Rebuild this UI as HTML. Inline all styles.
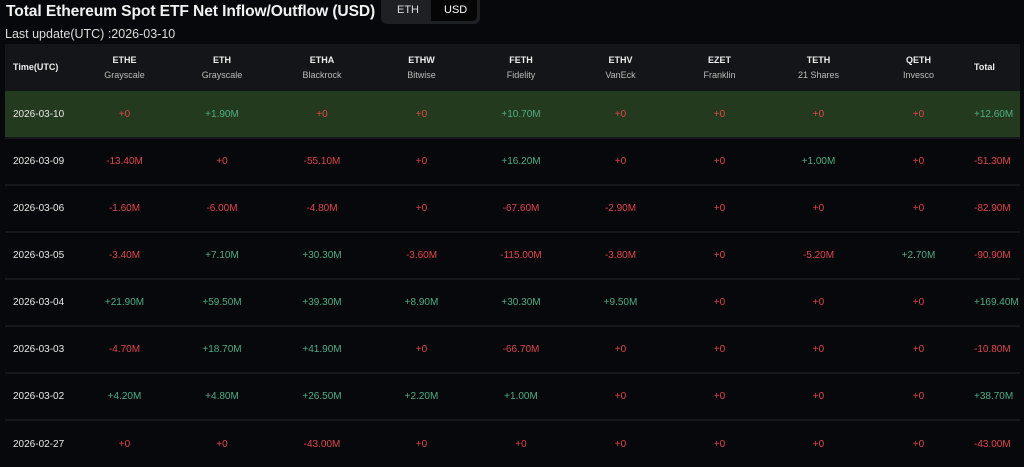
<!DOCTYPE html>
<html><head><style>
*{margin:0;padding:0;box-sizing:border-box}
body{width:1024px;height:464px;background:#07080b;font-family:"Liberation Sans",sans-serif;color:#e6e6e6;overflow:hidden;position:relative}
.title{position:absolute;left:6px;top:3px;font-size:15.6px;font-weight:bold;color:#f2f2f2;letter-spacing:-0.1px}
.tog{position:absolute;left:381px;top:0;width:99px;height:24px;background:#1e2023;border-radius:0 0 6px 6px;}
.tog span{position:absolute;top:4px;font-size:11px;color:#ddd}
.tog .usd{position:absolute;left:50px;top:0;width:46px;height:21px;background:#050505;border-radius:0 0 5px 0}
.upd{position:absolute;left:5px;top:27px;font-size:12.5px;color:#ddd}
table{position:absolute;left:5px;top:44px;width:1015px;border-collapse:collapse;font-size:10px}
th{background:#131518;height:47px;font-weight:normal;font-size:9px;color:#bbb;line-height:15px;text-align:center}
th b{color:#eee;font-weight:bold}
td{height:47px;text-align:center;border-top:2px solid #17181b}
td:first-child,th:first-child{text-align:left;padding-left:8px;color:#e8e8e8}
td:last-child,th:last-child{text-align:left;padding-left:5px}
tr.hl td{background:#243a1e;border-top:none}
.g{color:#4dae85}.r{color:#e0454c}
</style></head><body>
<div class="title">Total Ethereum Spot ETF Net Inflow/Outflow (USD)</div>
<div class="tog"><div class="usd"></div><span style="left:16px">ETH</span><span style="left:63px;color:#fff">USD</span></div>
<div class="upd">Last update(UTC) :2026-03-10</div>
<table>
<colgroup><col style="width:72px"><col style="width:95px"><col style="width:100px"><col style="width:100px"><col style="width:99px"><col style="width:100px"><col style="width:99px"><col style="width:99px"><col style="width:99px"><col style="width:101px"><col></colgroup>
<tr><th><b>Time(UTC)</b></th><th><b>ETHE</b><br>Grayscale</th><th><b>ETH</b><br>Grayscale</th><th><b>ETHA</b><br>Blackrock</th><th><b>ETHW</b><br>Bitwise</th><th><b>FETH</b><br>Fidelity</th><th><b>ETHV</b><br>VanEck</th><th><b>EZET</b><br>Franklin</th><th><b>TETH</b><br>21 Shares</th><th><b>QETH</b><br>Invesco</th><th><b>Total</b></th></tr>
<tr class="hl"><td>2026-03-10</td><td class="r">+0</td><td class="g">+1.90M</td><td class="r">+0</td><td class="r">+0</td><td class="g">+10.70M</td><td class="r">+0</td><td class="r">+0</td><td class="r">+0</td><td class="r">+0</td><td class="g">+12.60M</td></tr>
<tr><td>2026-03-09</td><td class="r">-13.40M</td><td class="r">+0</td><td class="r">-55.10M</td><td class="r">+0</td><td class="g">+16.20M</td><td class="r">+0</td><td class="r">+0</td><td class="g">+1.00M</td><td class="r">+0</td><td class="r">-51.30M</td></tr>
<tr><td>2026-03-06</td><td class="r">-1.60M</td><td class="r">-6.00M</td><td class="r">-4.80M</td><td class="r">+0</td><td class="r">-67.60M</td><td class="r">-2.90M</td><td class="r">+0</td><td class="r">+0</td><td class="r">+0</td><td class="r">-82.90M</td></tr>
<tr><td>2026-03-05</td><td class="r">-3.40M</td><td class="g">+7.10M</td><td class="g">+30.30M</td><td class="r">-3.60M</td><td class="r">-115.00M</td><td class="r">-3.80M</td><td class="r">+0</td><td class="r">-5.20M</td><td class="g">+2.70M</td><td class="r">-90.90M</td></tr>
<tr><td>2026-03-04</td><td class="g">+21.90M</td><td class="g">+59.50M</td><td class="g">+39.30M</td><td class="g">+8.90M</td><td class="g">+30.30M</td><td class="g">+9.50M</td><td class="r">+0</td><td class="r">+0</td><td class="r">+0</td><td class="g">+169.40M</td></tr>
<tr><td>2026-03-03</td><td class="r">-4.70M</td><td class="g">+18.70M</td><td class="g">+41.90M</td><td class="r">+0</td><td class="r">-66.70M</td><td class="r">+0</td><td class="r">+0</td><td class="r">+0</td><td class="r">+0</td><td class="r">-10.80M</td></tr>
<tr><td>2026-03-02</td><td class="g">+4.20M</td><td class="g">+4.80M</td><td class="g">+26.50M</td><td class="g">+2.20M</td><td class="g">+1.00M</td><td class="r">+0</td><td class="r">+0</td><td class="r">+0</td><td class="r">+0</td><td class="g">+38.70M</td></tr>
<tr><td>2026-02-27</td><td class="r">+0</td><td class="r">+0</td><td class="r">-43.00M</td><td class="r">+0</td><td class="r">+0</td><td class="r">+0</td><td class="r">+0</td><td class="r">+0</td><td class="r">+0</td><td class="r">-43.00M</td></tr>
</table>
</body></html>
